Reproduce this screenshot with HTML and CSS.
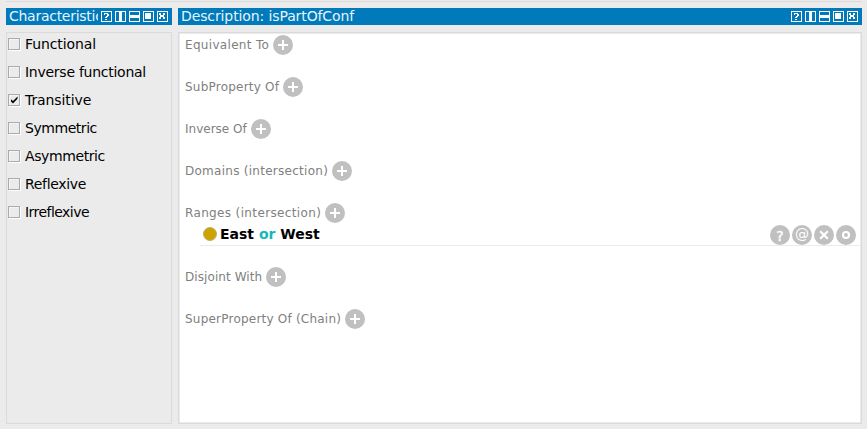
FILE: index.html
```
<!DOCTYPE html>
<html lang="en">
<head>
<meta charset="utf-8">
<title>Object property</title>
<link rel="stylesheet" href="styles.css">
</head>
<body>
<svg class="defs" aria-hidden="true">
  <symbol id="tools" viewBox="0 0 67 11">
    <g fill="none" stroke="#fff" shape-rendering="crispEdges">
      <path d="M.5.5h10v10H.5zM14.5.5h10v10h-10zM28.5.5h10v10h-10zM42.5.5h10v10h-10zM56.5.5h10v10h-10z"/>
    </g>
    <g fill="#fff" shape-rendering="crispEdges">
      <path d="M3 2h4v1H3zM3 3h1v1H3zM6 3h2v2H6zM5 5h2v1H5zM4 6h2v1H4zM4 8h2v1H4z"/>
      <path d="M18 1h3v9h-3zM29 4h9v3h-9zM44 2h6v6h-6z"/>
      <path d="M58 2h2v2h-2zM62 2h2v2h-2zM59 4h4v2h-4zM58 6h2v2h-2zM62 6h2v2h-2z"/>
    </g>
  </symbol>
  <symbol id="add" viewBox="0 0 20 20">
    <circle cx="10" cy="10" r="10" fill="#c0c0c0"/>
    <path d="M10 5v10M5 10h10" stroke="#fff" stroke-width="2"/>
  </symbol>
</svg>
<div class="divider"></div>
<main class="views">
  <section class="view">
    <header class="title narrow"><h2>Characteristic</h2><svg class="tools"><use href="#tools"/></svg></header>
    <div class="panel checks">
      <label><i class="box"></i><span class="t1">Functional</span></label>
      <label><i class="box"></i><span class="t2">Inverse functional</span></label>
      <label><i class="box"><svg viewBox="0 0 12 12"><path d="M3 5.3v2.2L5 9.4l4.5-4.6V2.6L5 7z"/></svg></i><span class="t3">Transitive</span></label>
      <label><i class="box"></i><span class="t4">Symmetric</span></label>
      <label><i class="box"></i><span class="t5">Asymmetric</span></label>
      <label><i class="box"></i><span class="t6">Reflexive</span></label>
      <label><i class="box"></i><span class="t7">Irreflexive</span></label>
    </div>
  </section>
  <section class="view">
    <header class="title"><h2>Description: isPartOfConf</h2><svg class="tools"><use href="#tools"/></svg></header>
    <div class="panel list">
      <div class="row"><span class="s1">Equivalent To</span><svg class="add"><use href="#add"/></svg></div>
      <div class="row"><span class="s2">SubProperty Of</span><svg class="add"><use href="#add"/></svg></div>
      <div class="row"><span class="s3">Inverse Of</span><svg class="add"><use href="#add"/></svg></div>
      <div class="row"><span class="s4">Domains (intersection)</span><svg class="add"><use href="#add"/></svg></div>
      <div class="row tight"><span class="s5">Ranges (intersection)</span><svg class="add"><use href="#add"/></svg></div>
      <div class="item">
        <i class="dot"></i><b>East <em>or</em> West</b>
        <div class="actions">
          <span class="act q">?</span><span class="act at">@</span>
          <svg class="act" viewBox="0 0 20 20"><path d="m6.2 6.2 7.6 7.6m0-7.6-7.6 7.6" stroke="#fff" stroke-width="2.2"/></svg>
          <svg class="act" viewBox="0 0 20 20"><circle cx="10" cy="10" r="3" fill="none" stroke="#fff" stroke-width="2.2"/></svg>
        </div>
      </div>
      <div class="row"><span class="s6">Disjoint With</span><svg class="add"><use href="#add"/></svg></div>
      <div class="row"><span class="s7">SuperProperty Of (Chain)</span><svg class="add"><use href="#add"/></svg></div>
    </div>
  </section>
</main>
</body>
</html>
```
FILE: styles.css
```
* { box-sizing: border-box; }
body { margin: 0; height: 429px; overflow: hidden; background: #ebebeb; font-family: "DejaVu Sans", sans-serif; padding: 1px 5px 5px 6px; display: flex; flex-direction: column; }
.defs { width: 0; height: 0; position: absolute; }
.divider { height: 1px; background: #dadada; margin-bottom: 6px; }
.views { flex: 1; display: grid; grid-template-columns: 166px 1fr; gap: 6px; }
.view { display: flex; flex-direction: column; min-width: 0; }
.title { height: 17px; margin-bottom: 7px; background: #007aba; color: #e8f4fa; display: flex; align-items: center; padding: 0 4px 0 3px; }
.title h2 { flex: 1; min-width: 0; margin: 0; font-size: 14px; font-weight: 400; line-height: 17px; white-space: nowrap; overflow: hidden; letter-spacing: -.11px; }
.title.narrow h2 { letter-spacing: -.27px; }
.tools { width: 67px; height: 11px; flex: none; margin-left: 3px; }
.panel { flex: 1; border: 1px solid #dadada; }
.checks { padding-top: 4px; padding-left: 1px; }
.checks label { display: flex; align-items: center; height: 14px; margin-bottom: 14px; font-size: 14px; color: #000; white-space: nowrap; }
.t1, .t3 { letter-spacing: -.1px; }
.t2 { letter-spacing: -.26px; }
.t4 { letter-spacing: -.45px; }
.t5 { letter-spacing: -.4px; }
.t6 { letter-spacing: -.33px; }
.t7 { letter-spacing: -.54px; }
.box { width: 12px; height: 12px; border: 1px solid #aaa; box-shadow: 1px 1px 0 #fff, inset 1px 1px 0 #f5f5f5; margin-right: 5px; flex: none; }
.box svg { display: block; width: 12px; height: 12px; margin: -1px; }
.list { background: #fff; box-shadow: inset 0 0 0 1px #ebebeb; padding: 2px 1px 0; }
.row { display: flex; align-items: center; height: 20px; margin-bottom: 22px; padding-left: 5px; font-size: 12px; color: #808080; white-space: nowrap; }
.row.tight { margin-bottom: 2px; }
.s1 { letter-spacing: .32px; }
.s5 { letter-spacing: .36px; }
.s2, .s7 { letter-spacing: .22px; }
.s4 { letter-spacing: .27px; }
.s6 { letter-spacing: .08px; }
.add { width: 20px; height: 20px; margin-left: 4px; }
.item { display: flex; align-items: center; height: 21px; margin: 0 0 21px 20px; border-bottom: 1px solid #ebebeb; padding: 0 4px 0 3px; font-size: 14px; line-height: 18px; }
.item b { margin: 0 0 2px 3px; white-space: pre; }
.item em { font-style: normal; color: #18b6b6; }
.dot { width: 14px; height: 14px; border-radius: 50%; background: #cca300; border: 1px solid #c0b070; margin-bottom: 2px; }
.actions { margin-left: auto; display: flex; gap: 2px; }
.act { width: 20px; height: 20px; border-radius: 50%; background: #c0c0c0; color: #fff; text-align: center; line-height: 19px; font-size: 14px; }
.q { line-height: 22px; -webkit-text-stroke: .4px #fff; }
```
